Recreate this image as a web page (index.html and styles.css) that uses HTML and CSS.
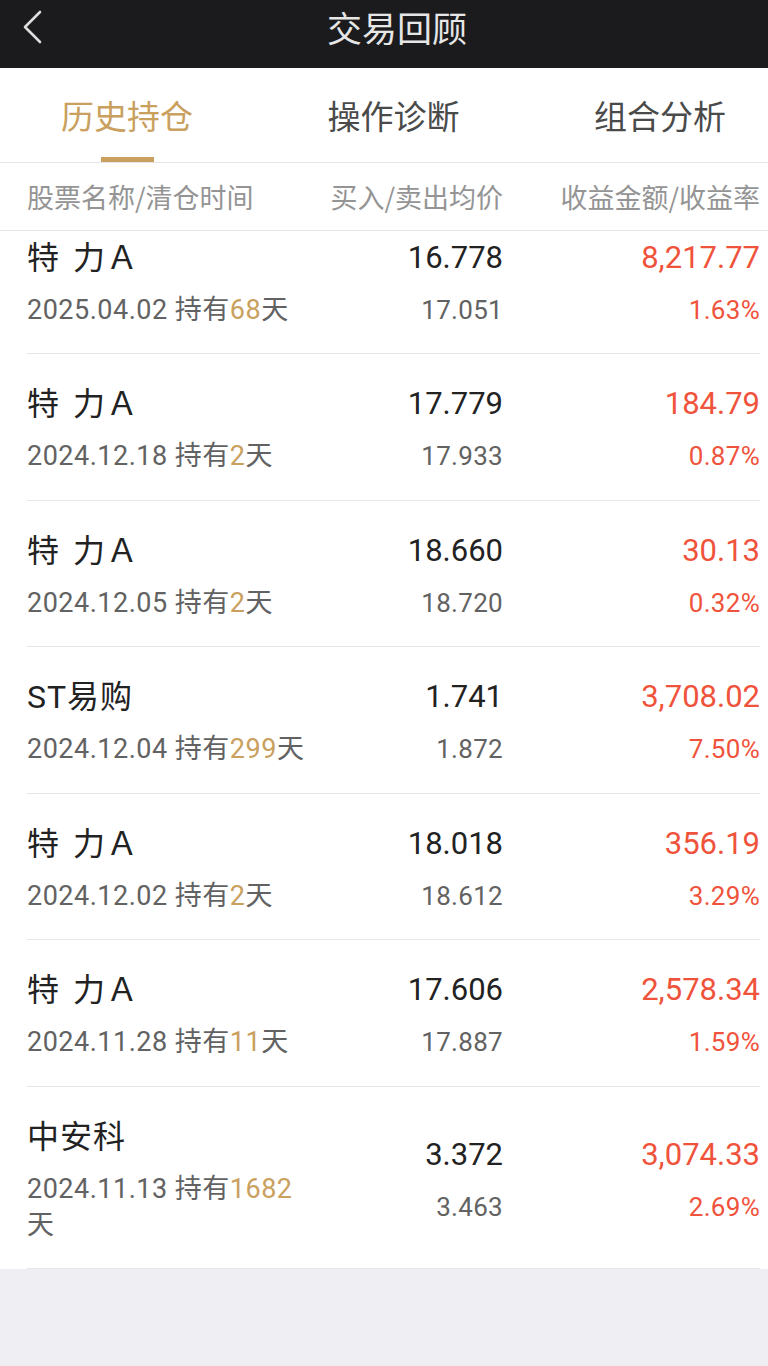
FILE: index.html
```html
<!DOCTYPE html>
<html lang="zh-CN">
<head>
    <meta charset="UTF-8">
    <meta name="viewport" content="width=device-width, initial-scale=1.0">
    <title>交易回顾</title>
    <link rel="stylesheet" href="styles.css">
</head>
<body>
    <header class="top-bar">
        <span class="back">
            <svg width="20" height="36" viewBox="0 0 20 36">
                <polyline points="17,3 2,18 17,33" fill="none" stroke="#dedede" stroke-width="2.6" stroke-linecap="round" stroke-linejoin="round"/>
            </svg>
        </span>
        <h1 class="title">交易回顾</h1>
        <span></span>
    </header>

    <nav class="tabs">
        <div class="tab active">历史持仓</div>
        <div class="tab">操作诊断</div>
        <div class="tab">组合分析</div>
    </nav>

    <div class="col-head">
        <div>股票名称/清仓时间</div>
        <div class="num">买入/卖出均价</div>
        <div class="num">收益金额/收益率</div>
    </div>

    <div class="list">
        <div class="list-inner">
            <div class="row">
                <div class="stock">
                    <div class="name">特 力Ａ</div>
                    <div class="sub">2025.04.02 持有<span class="days">68</span>天</div>
                </div>
                <div class="price">
                    <div class="big">16.778</div>
                    <div class="small">17.051</div>
                </div>
                <div class="profit">
                    <div class="big">8,217.77</div>
                    <div class="small">1.63%</div>
                </div>
            </div>

            <div class="row">
                <div class="stock">
                    <div class="name">特 力Ａ</div>
                    <div class="sub">2024.12.18 持有<span class="days">2</span>天</div>
                </div>
                <div class="price">
                    <div class="big">17.779</div>
                    <div class="small">17.933</div>
                </div>
                <div class="profit">
                    <div class="big">184.79</div>
                    <div class="small">0.87%</div>
                </div>
            </div>

            <div class="row">
                <div class="stock">
                    <div class="name">特 力Ａ</div>
                    <div class="sub">2024.12.05 持有<span class="days">2</span>天</div>
                </div>
                <div class="price">
                    <div class="big">18.660</div>
                    <div class="small">18.720</div>
                </div>
                <div class="profit">
                    <div class="big">30.13</div>
                    <div class="small">0.32%</div>
                </div>
            </div>

            <div class="row">
                <div class="stock">
                    <div class="name">ST易购</div>
                    <div class="sub">2024.12.04 持有<span class="days">299</span>天</div>
                </div>
                <div class="price">
                    <div class="big">1.741</div>
                    <div class="small">1.872</div>
                </div>
                <div class="profit">
                    <div class="big">3,708.02</div>
                    <div class="small">7.50%</div>
                </div>
            </div>

            <div class="row">
                <div class="stock">
                    <div class="name">特 力Ａ</div>
                    <div class="sub">2024.12.02 持有<span class="days">2</span>天</div>
                </div>
                <div class="price">
                    <div class="big">18.018</div>
                    <div class="small">18.612</div>
                </div>
                <div class="profit">
                    <div class="big">356.19</div>
                    <div class="small">3.29%</div>
                </div>
            </div>

            <div class="row">
                <div class="stock">
                    <div class="name">特 力Ａ</div>
                    <div class="sub">2024.11.28 持有<span class="days">11</span>天</div>
                </div>
                <div class="price">
                    <div class="big">17.606</div>
                    <div class="small">17.887</div>
                </div>
                <div class="profit">
                    <div class="big">2,578.34</div>
                    <div class="small">1.59%</div>
                </div>
            </div>

            <div class="row">
                <div class="stock">
                    <div class="name">中安科</div>
                    <div class="sub">2024.11.13 持有<span class="days">1682</span>天</div>
                </div>
                <div class="price">
                    <div class="big">3.372</div>
                    <div class="small">3.463</div>
                </div>
                <div class="profit">
                    <div class="big">3,074.33</div>
                    <div class="small">2.69%</div>
                </div>
            </div>
        </div>
    </div>
</body>
</html>
```

FILE: styles.css
```css
body {
    margin: 0;
    min-height: 100vh;
    background-color: #efeff3;
    font-family: Roboto, "Noto Sans CJK SC", sans-serif;
    color: #222;
}

/* 顶部标题栏 */
.top-bar {
    display: grid;
    grid-template-columns: 1fr auto 1fr;
    height: 68px;
    background-color: #1b1b1d;
}

.back {
    display: flex;
    align-items: center;
    height: 54px;
    padding-left: 23px;
}

.title {
    margin: 0 0 0 26px;
    font-size: 35px;
    font-weight: 400;
    line-height: 54px;
    color: #e6e6e6;
    font-family: "Noto Sans CJK SC", sans-serif;
}

/* 标签栏 */
.tabs {
    display: flex;
    justify-content: space-between;
    height: 94px;
    padding: 0 42px 0 61px;
    background-color: #fff;
    border-bottom: 1px solid #e6e6e6;
}

.tab {
    display: flex;
    flex-direction: column;
    align-items: center;
    padding-top: 27px;
    font-family: "Noto Sans CJK SC", sans-serif;
    font-size: 33px;
    line-height: 40px;
    color: #4a4a4a;
}

.tab.active {
    color: #c9a05e;
}

.tab.active::after {
    content: "";
    width: 53px;
    height: 5px;
    margin-top: auto;
    background-color: #c9a05e;
}

/* 列标题 */
.col-head {
    display: grid;
    grid-template-columns: 286px 190px 257px;
    align-items: center;
    height: 67px;
    padding: 0 8px 0 27px;
    background-color: #fff;
    border-bottom: 1px solid #e8e8e8;
    font-family: "Noto Sans CJK SC", sans-serif;
    font-size: 27px;
    color: #949494;
}

.num {
    text-align: right;
}

/* 列表 */
.list {
    overflow: hidden;
    background-color: #fff;
}

.list-inner {
    margin-top: -23.5px;
}

.row {
    display: grid;
    grid-template-columns: 286px 190px 257px;
    align-items: center;
    margin: 0 8px 0 27px;
    padding: 30px 0 25.5px;
    border-bottom: 1px solid #e8e8e8;
}

.name {
    font-size: 32px;
    line-height: 40px;
    letter-spacing: 1px;
    word-spacing: 4px;
    color: #222;
}

.sub {
    margin-top: 14px;
    font-size: 27px;
    line-height: 36px;
    letter-spacing: 0.5px;
    color: #626262;
}

.days {
    color: #c9a05e;
}

.price, .profit {
    text-align: right;
}

.big {
    font-size: 31px;
    line-height: 40px;
    color: #222;
}

.small {
    margin-top: 14px;
    font-size: 26px;
    line-height: 36px;
    letter-spacing: 0.3px;
    color: #626262;
}

.profit .big, .profit .small {
    color: #f0533b;
}
```
